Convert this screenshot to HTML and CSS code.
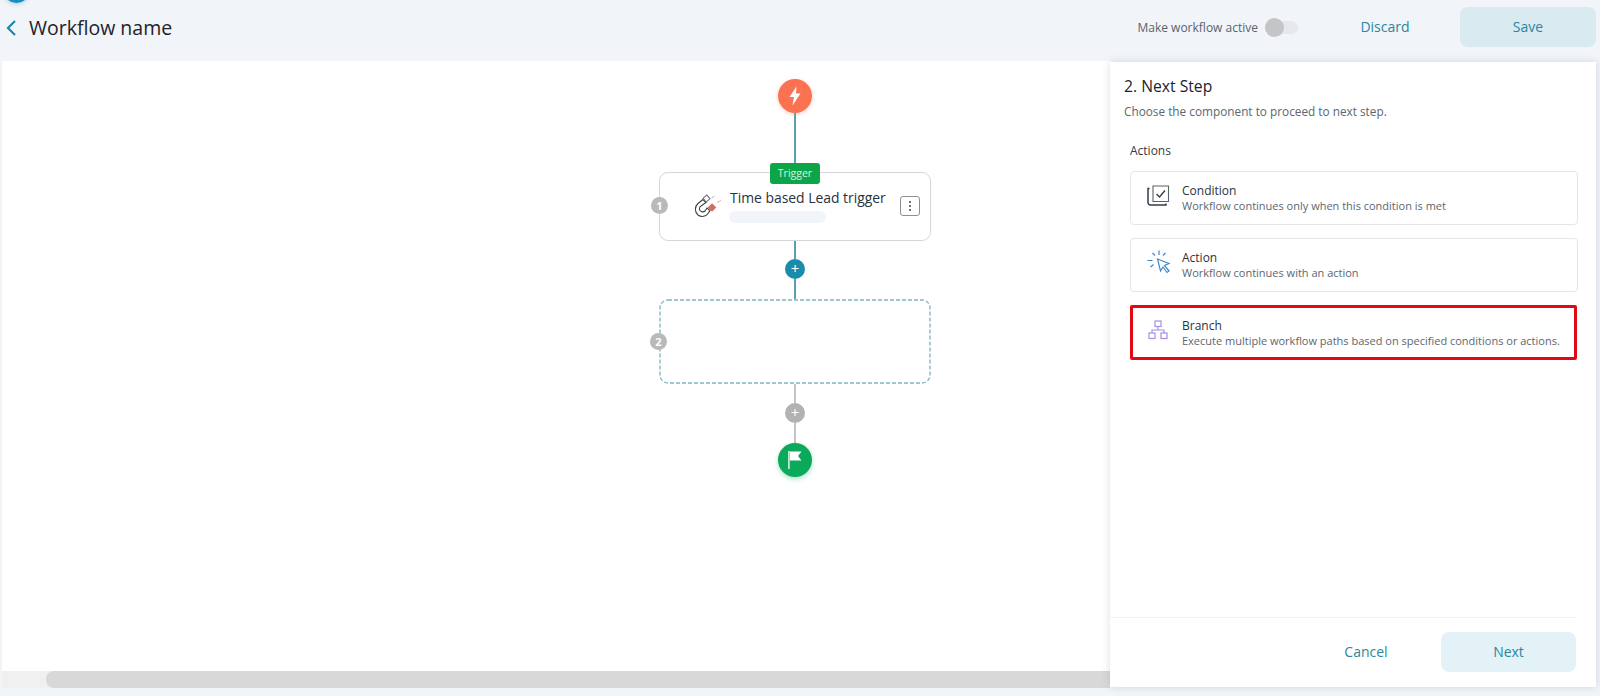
FILE: index.html
```html
<!DOCTYPE html>
<html lang="en">
<head>
<meta charset="utf-8">
<title>Workflow name</title>
<link rel="stylesheet" href="styles.css">
</head>
<body>
<div class="app">
  <span class="corner-dot"></span>
  <header class="topbar">
    <div class="title-group">
      <svg class="back" width="12" height="18" viewBox="0 0 12 18"><path d="M10 2 L3 9 L10 16" fill="none" stroke="#1a8aa8" stroke-width="2.2"/></svg>
      <h1 class="title">Workflow name</h1>
    </div>
    <div class="actions">
      <span class="active-label">Make workflow active</span>
      <span class="toggle"><span class="knob"></span></span>
      <button class="btn btn-plain discard">Discard</button>
      <button class="btn btn-save">Save</button>
    </div>
  </header>
  <main class="main">
    <section class="canvas-wrap">
      <div class="canvas">
        <div class="flow">
          <div class="circle start">
            <svg width="14" height="22" viewBox="0 0 14 20"><path d="M8.5 0.5 L1.5 11 H6 L4.5 19.5 L12.5 7.5 H8 Z" fill="#fff"/></svg>
          </div>
          <div class="line line-trigger"></div>
          <div class="node">
            <span class="badge">Trigger</span>
            <span class="step-num">1</span>
            <svg class="magnet" width="30" height="24" viewBox="0 0 30 24">
              <path d="M10 5.5 L5 9.5 C1.5 12.5 1.5 18 5 21 C8.5 23.5 13 22.5 15 19.5 L17 16.5 L14 14 L12 17 C10.5 18.5 8 18 7 16.5 C6 15 6.5 13 8 12 L13 8.5 Z" fill="#fff" stroke="#3a3f45" stroke-width="1.1"/>
              <rect x="11" y="2" width="5" height="5" transform="rotate(-40 13.5 4.5)" fill="#fff" stroke="#6a6e73" stroke-width="1"/>
              <rect x="16" y="10.5" width="6" height="6" transform="rotate(45 19 13.5)" fill="#cf6f5e"/>
              <path d="M18.5 4 L21.5 2.2 M24 8.5 L28 6.5" stroke="#e0a79c" stroke-width="1"/>
            </svg>
            <div class="node-text">
              <div class="node-title">Time based Lead trigger</div>
              <div class="skeleton"></div>
            </div>
            <button class="more"><svg width="4" height="12" viewBox="0 0 4 12"><circle cx="2" cy="2" r="1" fill="#444"/><circle cx="2" cy="6" r="1" fill="#444"/><circle cx="2" cy="10" r="1" fill="#444"/></svg></button>
          </div>
          <div class="line line-after-node"></div>
          <div class="plus plus-active">+</div>
          <div class="line line-next"></div>
          <div class="node-empty">
            <svg class="dash-frame" width="272" height="85" viewBox="0 0 272 85"><rect x="1" y="1" width="270" height="83" rx="8" fill="none" stroke="#7fb2c1" stroke-width="1.3" stroke-dasharray="4 2"/></svg>
            <span class="step-num">2</span>
          </div>
          <div class="line line-short line-grey"></div>
          <div class="plus plus-grey">+</div>
          <div class="line line-grey line-next"></div>
          <div class="circle end">
            <svg width="16" height="20" viewBox="0 0 16 20"><rect x="1" y="1" width="1.8" height="18" fill="#bfe8d2"/><path d="M3 1.5 H14.5 L11 6 L14.5 10.5 H3 Z" fill="#fff"/></svg>
          </div>
        </div>
      </div>
      <div class="scrollbar"><div class="thumb"></div></div>
    </section>
    <aside class="panel">
      <div class="panel-body">
        <h2 class="panel-title">2. Next Step</h2>
        <p class="panel-desc">Choose the component to proceed to next step.</p>
        <h3 class="section-label">Actions</h3>
        <div class="option">
          <svg class="opt-icon" width="24" height="24" viewBox="0 0 24 24" fill="none">
            <path d="M2.5 5.5 H1 V19.5 A2.5 2.5 0 0 0 3.5 22 H19 V20.5" stroke="#333d47" stroke-width="1.5"/>
            <path d="M6 3 H21.5 V18.5 H6 Z" stroke="#5a636c" stroke-width="1.1"/>
            <path d="M9.5 11 L12.5 14 L18 7.5" stroke="#333d47" stroke-width="1.4"/>
          </svg>
          <div><div class="opt-title">Condition</div><div class="opt-desc">Workflow continues only when this condition is met</div></div>
        </div>
        <div class="option">
          <svg class="opt-icon" width="24" height="24" viewBox="0 0 24 24" fill="none" stroke="#3f86c9" stroke-width="1.2">
            <path d="M10.5 9 L22 13.5 L17.5 15.5 L22 21 L20 22.5 L16 17 L13.5 21 Z"/>
            <path d="M12 0.5 V5 M5.5 3 L8 5.5 M18.5 3 L16 5.5 M0.5 10.5 H5.5 M3.5 17 L6.5 14.5"/>
          </svg>
          <div><div class="opt-title">Action</div><div class="opt-desc">Workflow continues with an action</div></div>
        </div>
        <div class="option option-hl">
          <svg class="opt-icon" width="20" height="20" viewBox="0 0 20 20" fill="none" stroke="#a78fdc" stroke-width="1.2">
            <rect x="7" y="1" width="6" height="5.5"/>
            <rect x="1" y="13" width="6" height="5.5"/>
            <rect x="13" y="13" width="6" height="5.5"/>
            <path d="M10 6.5 V10 M4 13 V10 H16 V13"/>
          </svg>
          <div><div class="opt-title">Branch</div><div class="opt-desc">Execute multiple workflow paths based on specified conditions or actions.</div></div>
        </div>
      </div>
      <footer class="panel-foot">
        <button class="btn btn-plain cancel">Cancel</button>
        <button class="btn btn-next">Next</button>
      </footer>
    </aside>
  </main>
</div>
</body>
</html>
```

FILE: styles.css
```css
* { box-sizing: border-box; }
html, body { margin: 0; height: 100%; }
body {
  background: #f1f4f8;
  font-family: "Open Sans", "Noto Sans", sans-serif;
  color: #1f2a35;
  overflow: hidden;
}
h1, h2, h3, p { margin: 0; font-weight: 400; }
button { font-family: inherit; border: 0; background: none; padding: 0; }

.app { position: relative; width: 1600px; height: 696px; overflow: hidden; }
.corner-dot {
  position: absolute; left: 3px; top: -24px;
  width: 27px; height: 27px; border-radius: 50%;
  background: #1a8cc0;
  box-shadow: 0 1px 4px rgba(26,140,192,.3);
}

.topbar {
  height: 61px;
  display: flex;
  align-items: flex-start;
  justify-content: space-between;
  padding: 7px 4px 0 5px;
}
.title-group { display: flex; align-items: center; height: 41px; gap: 12px; }
.back { display: block; }
.title { font-size: 19.5px; line-height: 26px; color: #1d232b; }
.actions { display: flex; align-items: center; height: 40px; }
.active-label { font-size: 12px; color: #59636e; margin-right: 7px; }
.toggle {
  display: block; width: 33px; height: 13px; border-radius: 7px;
  background: #e6e9ec; position: relative;
}
.knob {
  position: absolute; left: 0; top: -3px;
  width: 19px; height: 19px; border-radius: 50%;
  background: #c4c5c7;
}
.btn { display: block; font-size: 14px; font-weight: 500; color: #2a879f; border-radius: 8px; text-align: center; height: 40px; line-height: 40px; }
.discard { margin-left: 61px; width: 52px; margin-right: 49px; }
.btn-save { width: 136px; background: #d9eaf1; }

.main { display: flex; height: 627px; padding-left: 2px; }
.canvas-wrap {
  width: 1108px; display: flex; flex-direction: column;
  background: #fff; border-radius: 2px 0 0 0;
}
.canvas { flex: 1; padding: 18px 0 0 657px; }
.flow { width: 272px; display: flex; flex-direction: column; align-items: center; }

.circle {
  width: 34px; height: 34px; border-radius: 50%;
  display: flex; align-items: center; justify-content: center;
}
.start { background: #fb7252; box-shadow: 0 1px 4px rgba(251,114,82,.35); }
.end { background: #0ba95b; box-shadow: 0 2px 5px rgba(11,169,91,.35); }

.line { width: 2px; background: #5d9fb1; flex: none; }
.line-trigger { height: 59px; }
.line-after-node { height: 18px; }
.line-short { height: 19px; }
.line-next { height: 20px; }
.line-grey { background: #c6c6c6; }

.node {
  position: relative;
  width: 272px; height: 69px; flex: none;
  border: 1.5px solid #d5d7da; border-radius: 9px;
  display: flex; align-items: flex-start; background: #fff;
}
.node-empty { position: relative; width: 272px; height: 85px; flex: none; }
.dash-frame { position: absolute; left: 0; top: 0; display: block; }
.badge {
  position: absolute; left: 110px; top: -10px;
  width: 50px; height: 21px; line-height: 21px; text-align: center;
  background: #0ea548; color: #d9f3e3; font-size: 10.5px; border-radius: 3px;
}
.step-num {
  position: absolute; left: -9px; top: 24px;
  width: 17px; height: 17px; line-height: 17px; border-radius: 50%; text-align: center;
  background: #b9b9b9; color: #fff; font-size: 11px; font-weight: 700;
}
.node-empty .step-num { top: 34px; left: -9px; }
.magnet { margin: 21px 0 0 33px; flex: none; }
.node-text { margin: 15px 0 0 7px; width: 165px; }
.node-title { font-size: 13.9px; line-height: 20px; white-space: nowrap; color: #28323d; }
.skeleton { width: 97px; height: 12px; border-radius: 6px; background: #f1f4f8; margin: 3px 0 0 -1px; }
.more {
  position: absolute; right: 10px; top: 23px;
  width: 20px; height: 20px; border: 1px solid #8b8f94; border-radius: 3px;
  display: flex; align-items: center; justify-content: center; background: #fff;
}

.plus {
  width: 20px; height: 20px; border-radius: 50%; flex: none;
  color: #fff; font-size: 15px; line-height: 19px; text-align: center;
}
.plus-active { background: #1a8cab; }
.plus-grey { background: #b2b2b2; }

.scrollbar { height: 17px; background: #f0f0f0; padding-left: 44px; flex: none; }
.thumb { height: 100%; background: #d8d8d8; border-radius: 8px 0 0 8px; }

.panel {
  width: 486px; margin: 1px 4px 1px 0;
  background: #fff;
  box-shadow: 0 0 8px rgba(70,80,120,.18);
  display: flex; flex-direction: column;
  position: relative;
}
.panel-body { flex: 1; padding: 14px 18px 0 14px; }
.panel-title { font-size: 15.7px; line-height: 20px; color: #1d232b; }
.panel-desc { font-size: 11.8px; line-height: 16px; color: #5d6670; margin-top: 7px; }
.section-label { font-size: 12px; line-height: 16px; color: #333a42; margin: 24px 0 12px 6px; }
.option {
  display: flex; align-items: center;
  margin: 0 0 13px 6px; width: 448px; height: 54px;
  border: 1px solid #e4e6e9; border-radius: 4px;
  padding-left: 16px; background: #fff;
}
.opt-icon { flex: none; width: 24px; margin: 0 11px 6px 0; }
.opt-title { font-size: 12px; line-height: 16px; color: #2b323a; }
.opt-desc { font-size: 11px; line-height: 14px; color: #5d6670; white-space: nowrap; }
.option-hl { height: 55px; border: 3px solid #e00a14; border-radius: 2px; padding-left: 15px; margin-bottom: 0; width: 447px; }
.option-hl .opt-icon { width: 20px; margin: 0 14px 6px 0; }

.panel-foot {
  height: 70px; flex: none; margin: 0 20px 0 0;
  border-top: 1px solid #f0f1f3;
  display: flex; align-items: flex-start; justify-content: flex-end;
  padding-top: 14px;
}
.cancel { width: 60px; margin-right: 45px; }
.btn-next { width: 135px; background: #e3f2f6; }
```
